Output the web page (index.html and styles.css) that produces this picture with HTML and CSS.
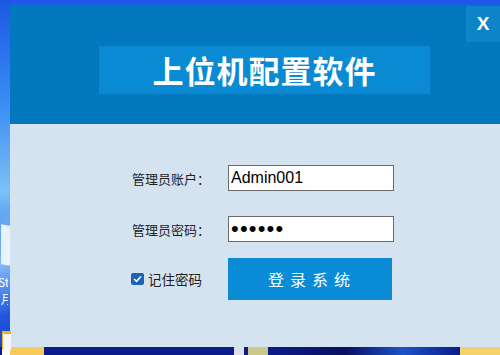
FILE: index.html
```html
<!DOCTYPE html>
<html lang="zh-CN">
<head>
  <meta charset="UTF-8">
  <title>上位机配置软件</title>
  <link rel="stylesheet" href="styles.css">
</head>
<body>

  <div class="desktop">
    <div class="desk-side">
      <div class="desk-label">St<br>&nbsp;月</div>
      <div class="desk-doc"></div>
      <div class="desk-folder"></div>
    </div>

    <!-- Fenêtre de connexion -->
    <div class="window">
      <div class="header">
        <div class="title">上位机配置软件</div>
        <div class="close">X</div>
      </div>

      <div class="content">
        <form class="login">
          <label class="row1">管理员账户：</label>
          <input type="text" class="field row1" value="Admin001">
          <label class="row2">管理员密码：</label>
          <input type="password" class="field pwd row2" value="123456">
          <div class="remember row3">
            <span class="check">
              <svg width="9" height="8" viewBox="0 0 9 8"><path d="M1 4 L3.5 6.3 L8 1.5" fill="none" stroke="#fff" stroke-width="1.6"/></svg>
            </span>
            记住密码
          </div>
          <button type="button" class="submit row3">登录系统</button>
        </form>
      </div>
    </div>
  </div>

  <div class="taskbar">
    <span class="tb-start"></span>
    <span class="tb-icon"></span>
    <span class="tb-icon tb-yellow"></span>
    <span class="tb-fill"></span>
    <span class="tb-end"></span>
  </div>

</body>
</html>
```

FILE: styles.css
```css
html, body {
  margin: 0;
  padding: 0;
}

body {
  width: 500px;
  height: 355px;
  overflow: hidden;
  font-family: "Noto Sans CJK SC", "Noto Sans", sans-serif;
  background: linear-gradient(100deg, #1a4fe0 0%, #2f7ff0 30%, #6fb8f6 55%, #2a6fe6 80%, #1b3fd0 100%);
}

.desktop {
  display: flex;
  height: 347px;
  padding-top: 5px;
  box-sizing: border-box;
  background:
    linear-gradient(160deg, transparent 40%, rgba(170, 215, 255, 0.7) 50%, transparent 60%),
    linear-gradient(180deg, #1d57e6 0%, #3a8ef2 30%, #7cc0f8 55%, #2a72e8 75%, #1a46d6 100%);
}

.desk-side {
  width: 10px;
  position: relative;
  color: #fff;
  font-size: 12px;
}

.desk-label {
  position: absolute;
  top: 268px;
  left: -2px;
  line-height: 17px;
  white-space: nowrap;
  overflow: hidden;
  width: 10px;
}

.desk-doc {
  position: absolute;
  top: 220px;
  left: 1px;
  width: 9px;
  height: 40px;
  background: #e9f1fb;
  transform: skewY(10deg);
}

.desk-folder {
  position: absolute;
  top: 326px;
  left: 2px;
  width: 8px;
  height: 16px;
  background: #f5f7fb;
  border-top: 3px solid #f3b51f;
  border-left: 1px solid #f3b51f;
}

.window {
  flex: 1;
  display: flex;
  flex-direction: column;
  background-color: #d5e3f1;
}

.header {
  position: relative;
  height: 119px;
  background-color: #0478be;
  padding-top: 41px;
  box-sizing: border-box;
}

.title {
  margin-left: 89px;
  width: 331px;
  height: 48px;
  background-color: #0a8ad2;
  color: #fff;
  font-size: 31px;
  font-weight: bold;
  line-height: 48px;
  text-align: center;
  letter-spacing: 1px;
}

.close {
  position: absolute;
  top: 1px;
  right: 0;
  width: 34px;
  height: 36px;
  background-color: #0d84c8;
  color: #fff;
  font-family: "Liberation Sans", Arial, sans-serif;
  font-size: 19px;
  font-weight: bold;
  line-height: 36px;
  text-align: center;
}

.content {
  flex: 1;
  padding: 41px 0 0 122px;
}

.login {
  display: grid;
  grid-template-columns: 96px 166px;
  grid-template-rows: 26px 25px 26px 16px 42px;
  align-items: center;
}

.row1 { grid-row: 1; }
.row2 { grid-row: 3; }
.row3 { grid-row: 5; }

label {
  font-size: 13px;
  color: #1e1e1e;
}

.field {
  width: 166px;
  height: 26px;
  box-sizing: border-box;
  border: 1px solid #6b6b6b;
  background: #fff;
  padding: 0 2px;
  font-family: "Liberation Sans", Arial, sans-serif;
  font-size: 16px;
  color: #000;
  outline: none;
}

.pwd {
  font-size: 22px;
  letter-spacing: 1.2px;
}

.remember {
  display: flex;
  align-items: center;
  gap: 4px;
  font-size: 13.5px;
  color: #1e1e1e;
  margin-left: -1px;
}

.check {
  width: 13px;
  height: 12px;
  border-radius: 2px;
  background-color: #1a63b8;
  display: flex;
  align-items: center;
  justify-content: center;
}

.submit {
  width: 164px;
  height: 42px;
  border: none;
  background-color: #0a8bd6;
  color: #fff;
  font-family: "Noto Sans CJK SC", sans-serif;
  font-size: 16px;
  letter-spacing: 6px;
  padding: 0 0 0 4px;
}

.taskbar {
  display: flex;
  height: 8px;
  background-color: #0c1c8a;
}

.taskbar span {
  display: block;
  height: 8px;
}

.tb-start {
  width: 44px;
  background: linear-gradient(90deg, #0c1c8a 0 2px, #fff 2px 10px, #f6c95a 10px);
}

.tb-icon {
  width: 10px;
  margin-left: 190px;
  background: #e0e0e8;
}

.tb-yellow {
  margin-left: 4px;
  width: 20px;
  background: #c9c98a;
}

.tb-fill {
  flex: 1;
  background: linear-gradient(90deg, #0c1c8a 0%, #091060 40%, #1d52c8 70%, #0c1c8a 100%);
}

.tb-end {
  width: 40px;
  background: #f6d36a;
}
```
